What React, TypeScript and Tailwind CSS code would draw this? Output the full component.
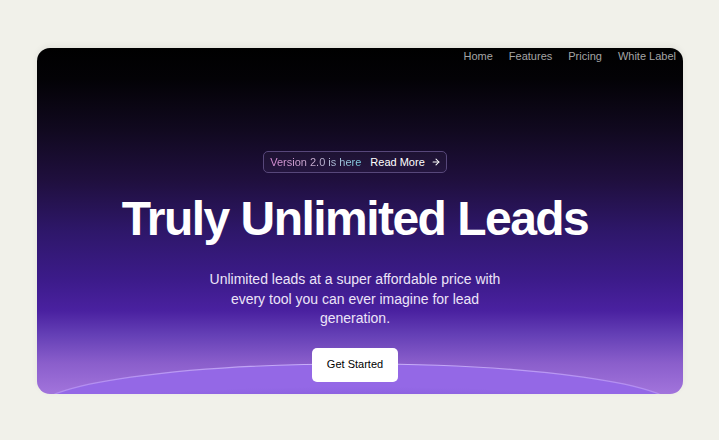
import React from 'react';
import { ArrowRight } from 'lucide-react';

const navLinks = ['Home', 'Features', 'Pricing', 'White Label'];

const HorizonArc: React.FC = () => (
  <svg
    className="absolute left-0 bottom-0 pointer-events-none"
    width="646"
    height="60"
    viewBox="0 0 646 60"
  >
    <defs>
      <radialGradient id="arcFill" cx="0.5" cy="1" r="0.75" fx="0.5" fy="1.2">
        <stop offset="0%" stopColor="#4a2f98" />
        <stop offset="45%" stopColor="#6a45c4" />
        <stop offset="100%" stopColor="#9468e6" />
      </radialGradient>
      <linearGradient id="arcStroke" x1="0" x2="1" y1="0" y2="0">
        <stop offset="0%" stopColor="#c6a6ff" stopOpacity="0.5" />
        <stop offset="50%" stopColor="#d4c0ff" stopOpacity="0.9" />
        <stop offset="100%" stopColor="#c6a6ff" stopOpacity="0.5" />
      </linearGradient>
    </defs>
    <ellipse cx="320" cy="75" rx="320" ry="45" fill="url(#arcFill)" />
    <ellipse cx="320" cy="75" rx="320" ry="45" fill="none" stroke="url(#arcStroke)" strokeWidth="1.2" />
  </svg>
);

const App: React.FC = () => {
  return (
    <div className="h-[440px] w-full bg-[#f1f1ea] pt-[48px] pl-[37px] font-['Liberation_Sans',Arial,sans-serif]">
      <div className="relative w-[646px] h-[346px] rounded-[13px] overflow-hidden shadow-[0_-2px_6px_rgba(0,0,0,0.06)] bg-[linear-gradient(to_bottom,#000000_0%,#030206_9%,#110920_24%,#1f0f3d_38%,#2e176a_53%,#3c1b8a_67%,#4a21a0_76%,#6540b6_83%,#8a5ecb_91%,#a274dc_100%)] flex flex-col">
        <nav className="self-end flex items-center gap-[16px] pr-[7px] h-[16px] text-[11px] text-[#a5a5a5]">
          {navLinks.map((link) => (
            <span key={link}>{link}</span>
          ))}
        </nav>

        <HorizonArc />

        <div className="relative z-10 flex flex-col items-center pr-[10px]">
          <div className="mt-[87px] h-[22px] flex items-center gap-[9px] pl-[6px] pr-[5px] rounded-[5px] border border-[#57477a] bg-white/[0.03] text-[11px]">
            <span className="bg-linear-to-r from-[#dc8fd8] via-[#c9b2d2] to-[#7cd4e8] bg-clip-text text-transparent">
              Version 2.0 is here
            </span>
            <span className="flex items-center gap-[6px] text-white">
              Read More
              <ArrowRight size={10} strokeWidth={2.5} />
            </span>
          </div>

          <h1 className="mt-[22px] text-[48px] leading-[48px] font-bold tracking-[-0.032em] text-white">
            Truly Unlimited Leads
          </h1>

          <p className="mt-[27px] max-w-[300px] text-center text-[14px] leading-[19.5px] text-[#ece4f8]">
            Unlimited leads at a super affordable price with every tool you can ever imagine for lead generation.
          </p>

          <button className="mt-[19px] h-[34px] px-[15px] rounded-[5px] bg-white text-[11px] text-black">
            Get Started
          </button>
        </div>
      </div>
    </div>
  );
};

export default App;
